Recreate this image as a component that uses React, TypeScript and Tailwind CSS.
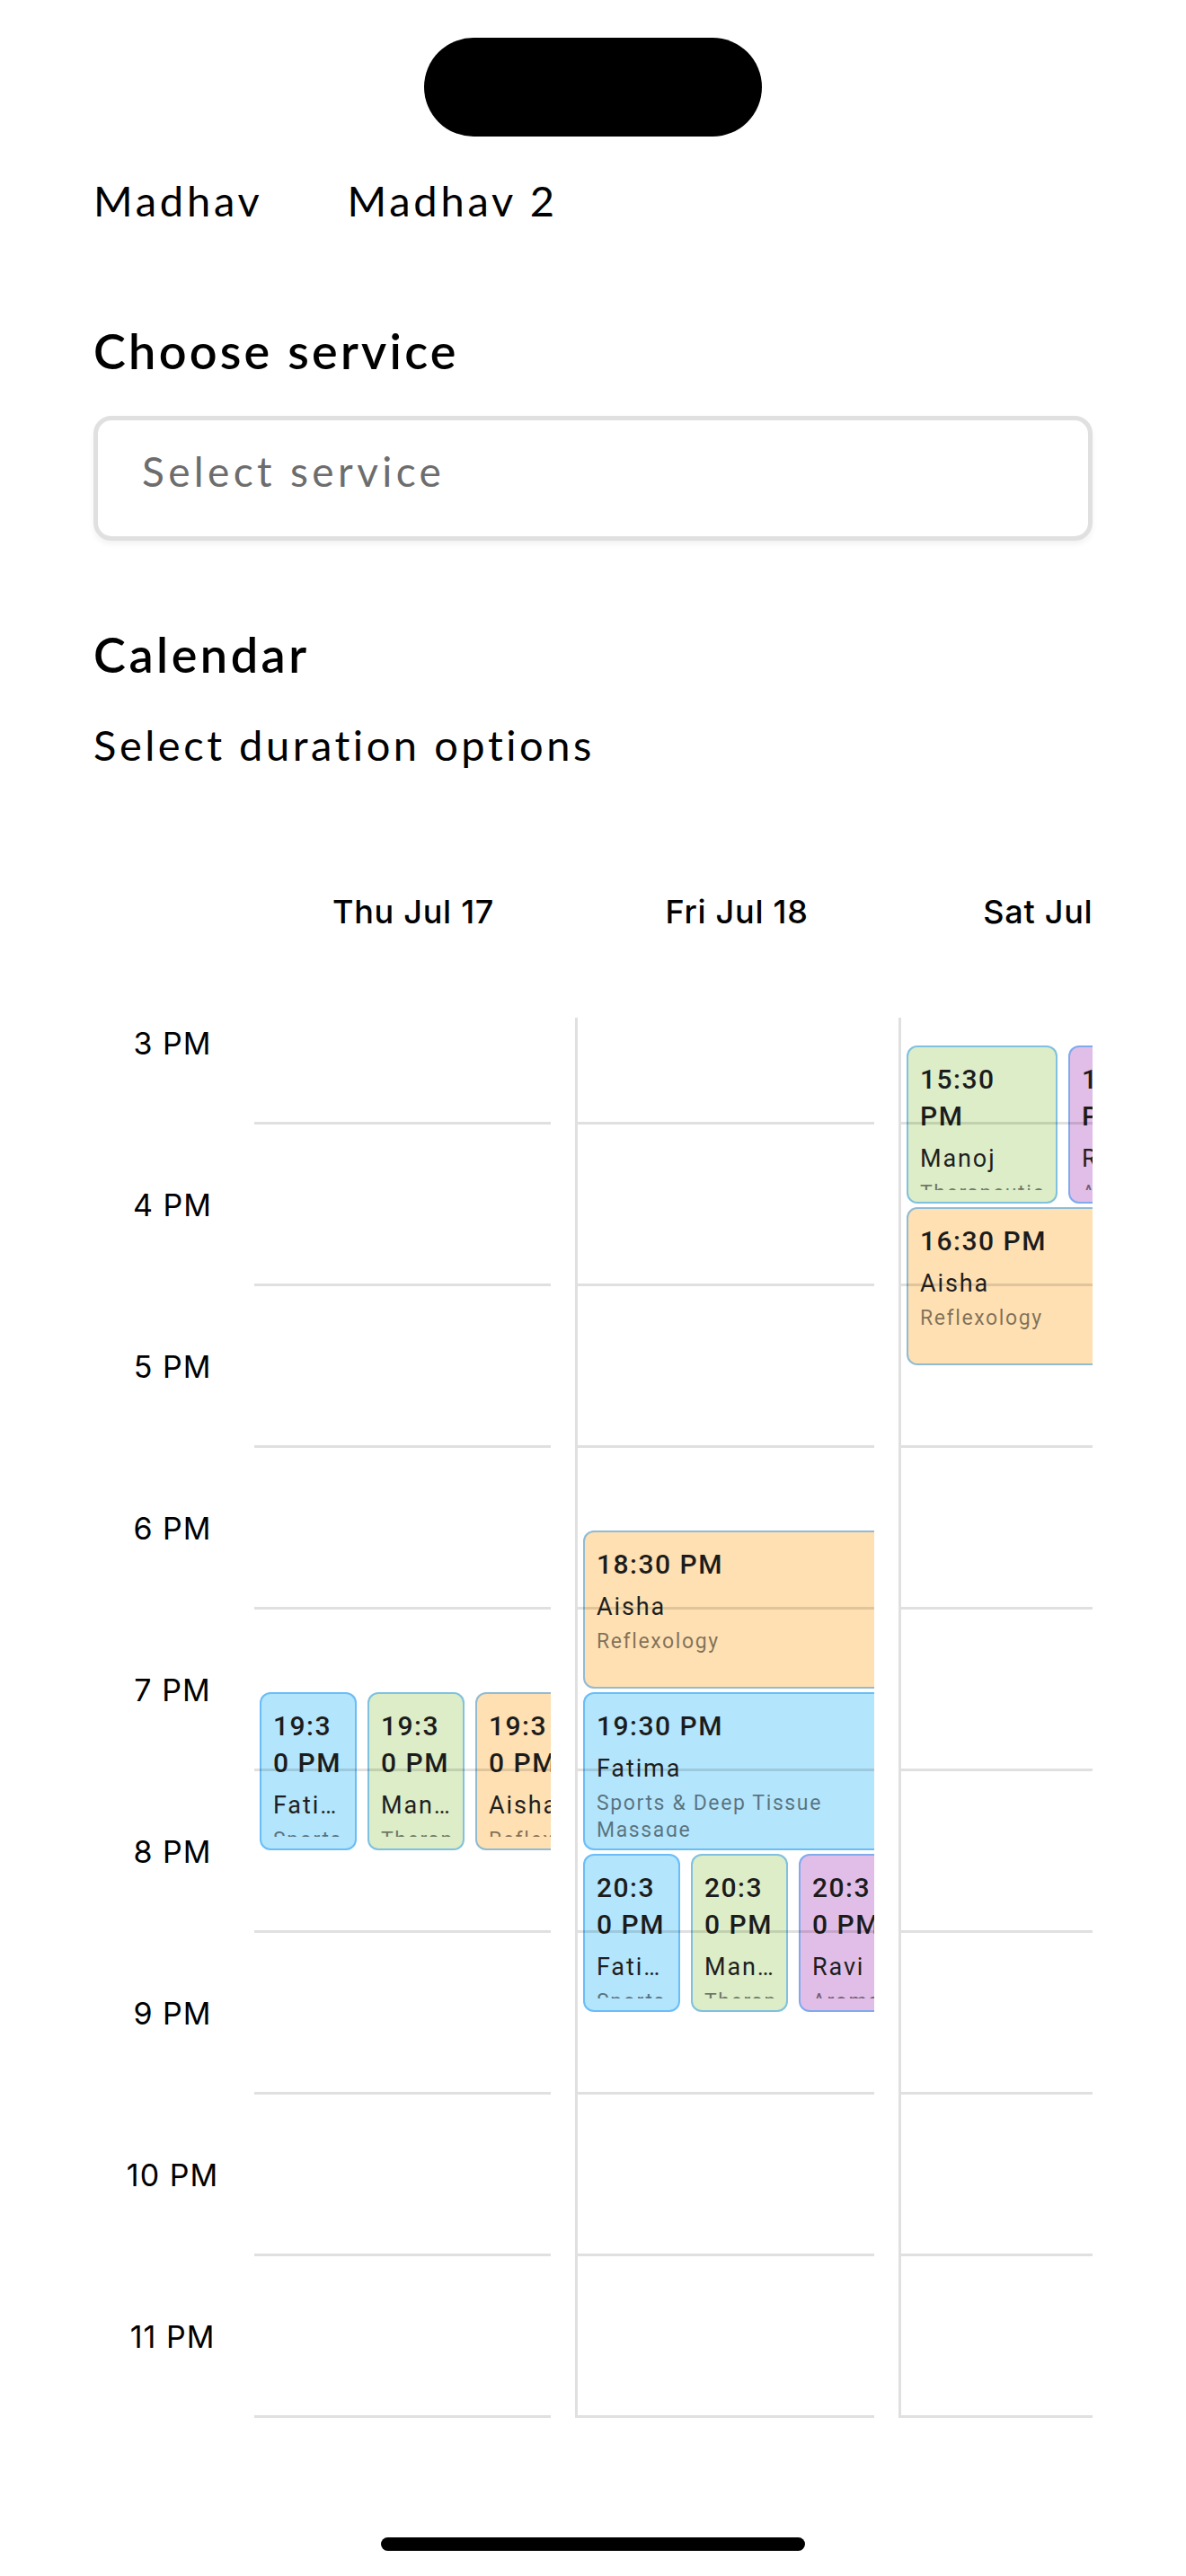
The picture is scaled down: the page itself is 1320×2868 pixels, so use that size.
import React from "react"

type Tone = "blue" | "green" | "orange" | "purple"

type Booking = {
  day: number
  start: number
  col: number
  cols: number
  name: string
  service: string
  tone: Tone
}

const HOUR_PX = 180
const FIRST_HOUR = 15

const days = ["Thu Jul 17", "Fri Jul 18", "Sat Jul 19"]
const hours = ["3 PM", "4 PM", "5 PM", "6 PM", "7 PM", "8 PM", "9 PM", "10 PM", "11 PM"]

const toneBg: Record<Tone, string> = {
  blue: "bg-[#b3e5fc]",
  green: "bg-[#dcedc8]",
  orange: "bg-[#ffe0b2]",
  purple: "bg-[#e1bee7]",
}

const bookings: Booking[] = [
  { day: 0, start: 19.5, col: 0, cols: 3, name: "Fatima", service: "Sports & Deep Tissue Massage", tone: "blue" },
  { day: 0, start: 19.5, col: 1, cols: 3, name: "Manoj", service: "Therapeutic Massage", tone: "green" },
  { day: 0, start: 19.5, col: 2, cols: 3, name: "Aisha", service: "Reflexology", tone: "orange" },
  { day: 1, start: 18.5, col: 0, cols: 1, name: "Aisha", service: "Reflexology", tone: "orange" },
  { day: 1, start: 19.5, col: 0, cols: 1, name: "Fatima", service: "Sports & Deep Tissue Massage", tone: "blue" },
  { day: 1, start: 20.5, col: 0, cols: 3, name: "Fatima", service: "Sports & Deep Tissue Massage", tone: "blue" },
  { day: 1, start: 20.5, col: 1, cols: 3, name: "Manoj", service: "Therapeutic Massage", tone: "green" },
  { day: 1, start: 20.5, col: 2, cols: 3, name: "Ravi", service: "Aromatherapy", tone: "purple" },
  { day: 2, start: 15.5, col: 0, cols: 2, name: "Manoj", service: "Therapeutic Massage", tone: "green" },
  { day: 2, start: 15.5, col: 1, cols: 2, name: "Ravi", service: "Aromatherapy", tone: "purple" },
  { day: 2, start: 16.5, col: 0, cols: 1, name: "Aisha", service: "Reflexology", tone: "orange" },
]

function label(start: number) {
  const h = Math.floor(start)
  const m = Math.round((start - h) * 60)
  return `${h}:${m.toString().padStart(2, "0")} PM`
}

function BookingCard({ b }: { b: Booking }) {
  const pitch = 360 / b.cols
  return (
    <div
      className={`absolute h-[176px] rounded-[12px] border-2 border-[#2196f3]/50 px-[13px] pt-[15px] pb-[13px] font-['Roboto',sans-serif] ${toneBg[b.tone]}`}
      style={{ top: (b.start - FIRST_HOUR) * HOUR_PX + 2, left: 6 + b.col * pitch, width: pitch - 12 }}
    >
      <div className="h-full overflow-hidden">
        <div className="break-words text-[30px] font-medium leading-[41px] tracking-[0.05em] text-[#1c1c1c]">
          {label(b.start)}
        </div>
        <div className="mt-[9px] truncate text-[27px] leading-[36px] tracking-[0.07em] text-[#1f1f1f]">{b.name}</div>
        <div className="mt-[6px] text-[23px] leading-[30px] tracking-[0.07em] text-black/50">{b.service}</div>
      </div>
    </div>
  )
}

export default function App() {
  return (
    <div className="min-h-screen bg-white font-['Lato',sans-serif] text-black">
      <div className="mx-auto mt-[42px] h-[110px] w-[376px] rounded-full bg-black" />

      <div className="px-[104px]">
        <div className="mt-[43px] flex gap-[94px] text-[47px] leading-[56px] tracking-[0.08em]">
          <span>Madhav</span>
          <span>Madhav 2</span>
        </div>

        <h2 className="mt-[108px] text-[54px] font-semibold leading-[64px] tracking-[0.06em]">Choose service</h2>
        <div className="mt-[40px] h-[139px] rounded-[20px] border-[5px] border-[#e0e0e0] pl-[49px] pt-[29px] shadow-[0_4px_6px_rgba(0,0,0,0.05)]">
          <span className="text-[46px] leading-[56px] tracking-[0.095em] text-[#6d6d6d]">Select service</span>
        </div>

        <h2 className="mt-[95px] text-[54px] font-semibold leading-[64px] tracking-[0.065em]">Calendar</h2>
        <p className="mt-[40px] text-[47px] leading-[56px] tracking-[0.075em]">Select duration options</p>

        <div className="mt-[134px] flex font-['Inter',sans-serif]">
          <div className="w-[176px] shrink-0" />
          <div className="flex-1 overflow-hidden">
            <div className="flex">
              {days.map((d) => (
                <div
                  key={d}
                  className="w-[360px] shrink-0 whitespace-nowrap text-center text-[36px] font-medium leading-[48px] tracking-[0.02em]"
                >
                  {d}
                </div>
              ))}
            </div>
          </div>
        </div>

        <div className="mt-[94px] flex h-[1559px] overflow-hidden font-['Inter',sans-serif]">
          <div className="w-[176px] shrink-0">
            <div className="-mt-[61px] flex flex-col">
              {hours.map((h) => (
                <div
                  key={h}
                  className="flex h-[180px] shrink-0 items-center justify-center text-[34px] leading-[40px] tracking-[0.03em]"
                >
                  {h}
                </div>
              ))}
            </div>
          </div>

          <div className="flex-1 overflow-hidden">
            <div className="-mt-[61px] flex">
              {days.map((d, i) => (
                <div key={d} className="w-[360px] shrink-0 pr-[27px]">
                  <div
                    className={`h-[1620px] border-l-[3px] ${i === 0 ? "border-transparent" : "border-[#e0e0e0]"}`}
                  >
                    <div className="relative h-full w-[330px] overflow-hidden">
                      {bookings
                        .filter((b) => b.day === i)
                        .map((b, k) => (
                          <BookingCard key={k} b={b} />
                        ))}
                      <div className="pointer-events-none absolute inset-0 flex flex-col">
                        {hours.map((h) => (
                          <div key={h} className="h-[180px] shrink-0 border-b-[3px] border-black/[0.12]" />
                        ))}
                      </div>
                    </div>
                  </div>
                </div>
              ))}
            </div>
          </div>
        </div>
      </div>

      <div className="mx-auto mt-[133px] h-[15px] w-[472px] rounded-full bg-black" />
    </div>
  )
}
